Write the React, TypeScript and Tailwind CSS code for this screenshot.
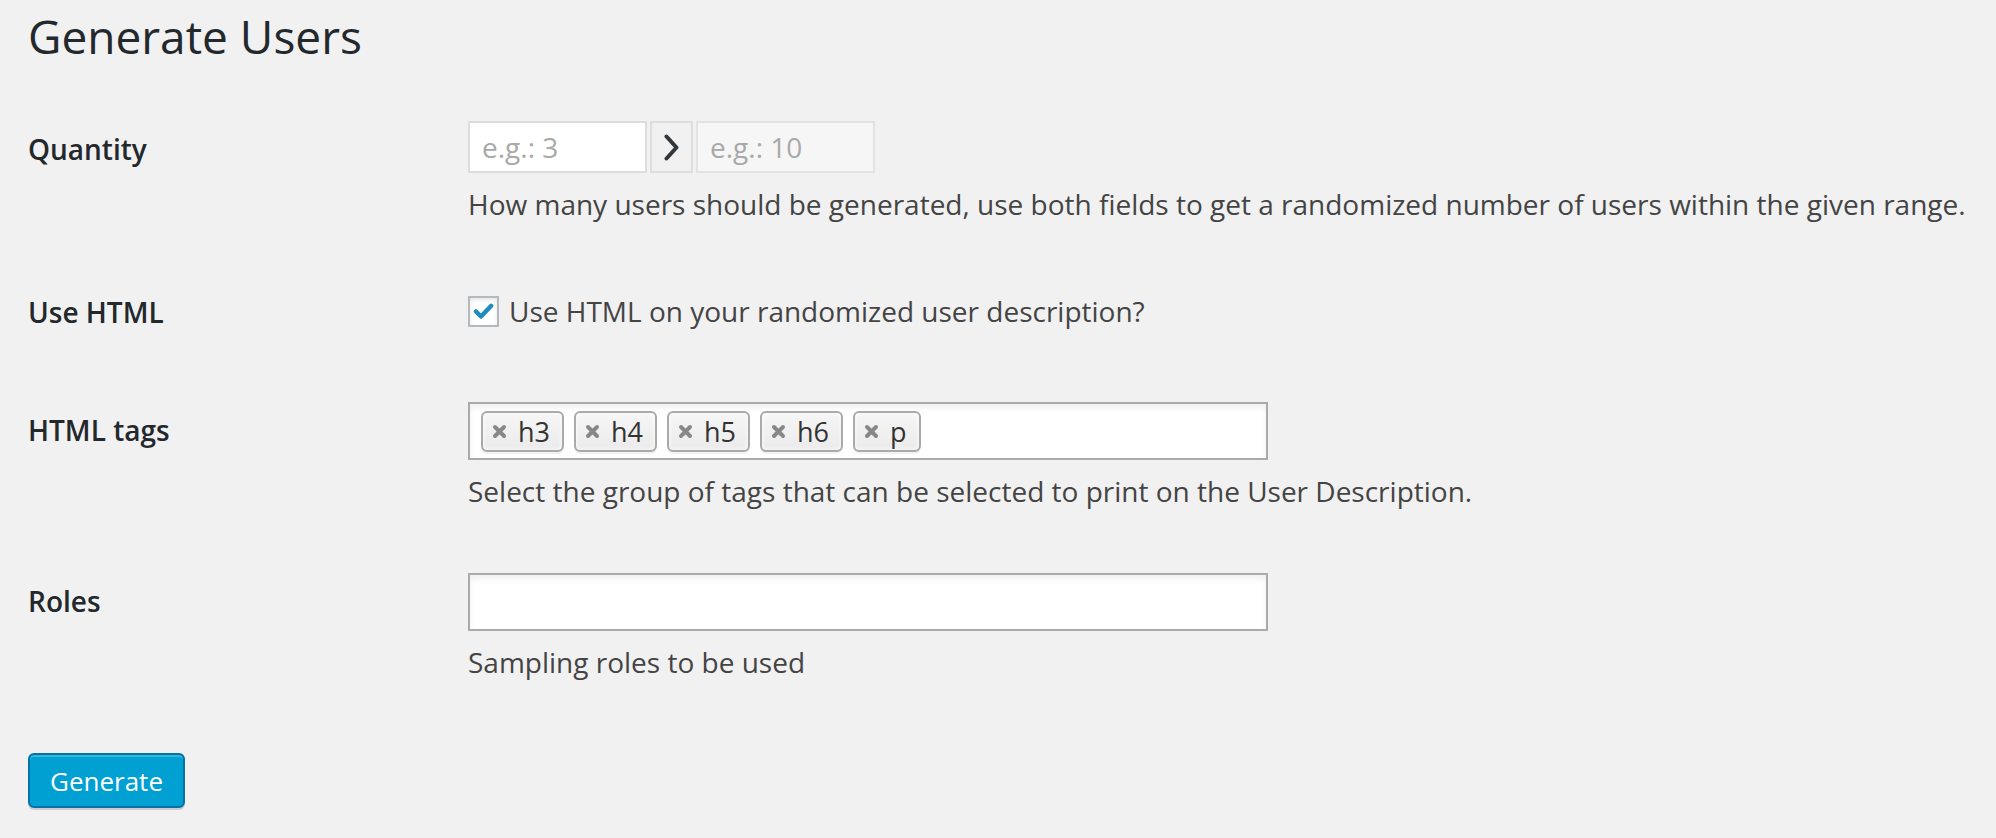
import type { ReactNode } from "react";

const tags = ["h3", "h4", "h5", "h6", "p"];

export default function App() {
  return (
    <div className="min-h-screen bg-[#f1f1f1] px-[28px] font-['Open_Sans',sans-serif] text-[#444]">
      <h1 className="pt-[6px] text-[46px] leading-[60px] font-normal text-[#23282d]">Generate Users</h1>

      <div className="mt-[25px]">
        <Row label="Quantity">
          <div className="flex items-stretch gap-[3px]">
            <input
              className="h-[52px] w-[179px] border-2 border-[#ddd] bg-white px-[12px] text-[28px] text-[#32373c] outline-none placeholder:text-[#a9a9a9]"
              placeholder="e.g.: 3"
            />
            <div className="flex h-[52px] w-[43px] items-center justify-center border-2 border-[#ddd] bg-[#f1f1f1]">
              <svg width="15" height="27" viewBox="0 0 15 27" fill="none">
                <path d="M2.5 2.5 L12.5 13.5 L2.5 24.5" stroke="#32373c" strokeWidth="4" strokeLinecap="round" strokeLinejoin="round" />
              </svg>
            </div>
            <input
              className="h-[52px] w-[179px] border-2 border-[#e2e2e2] bg-[#f6f6f6] px-[12px] text-[28px] text-[#32373c] outline-none placeholder:text-[#a9a9a9]"
              placeholder="e.g.: 10"
            />
          </div>
          <Description>
            How many users should be generated, use both fields to get a randomized number of users within the given range.
          </Description>
        </Row>

        <Row label="Use HTML">
          <label className="flex items-center gap-[10px] pt-[12px] text-[28px] leading-[31px] text-[#444]">
            <span className="flex h-[31px] w-[31px] items-center justify-center border-2 border-[#b4b9be] bg-white shadow-[inset_0_2px_4px_rgba(0,0,0,0.1)]">
              <svg width="21" height="17" viewBox="0 0 21 17" fill="none">
                <path d="M3 8.5 L8 13.5 L18 3" stroke="#1e8cbe" strokeWidth="4.5" strokeLinecap="round" strokeLinejoin="round" />
              </svg>
            </span>
            Use HTML on your randomized user description?
          </label>
        </Row>

        <Row label="HTML tags" bottom="pb-[32px]">
          <div className="flex h-[58px] w-[800px] items-center gap-[10px] border-2 border-[#aaa] bg-white px-[11px] shadow-[inset_0_4px_6px_rgba(0,0,0,0.06)]">
            {tags.map((tag) => (
              <span
                key={tag}
                className="flex h-[41px] items-center gap-[11px] rounded-[6px] border-2 border-[#aaa] bg-gradient-to-b from-[#f6f6f6] to-[#ebebeb] pr-[12px] pl-[9px] text-[27px] leading-none text-[#333] shadow-[inset_0_0_4px_#fff,0_2px_0_rgba(0,0,0,0.05)]"
              >
                <svg width="15" height="15" viewBox="0 0 15 15" fill="none">
                  <path d="M3 3 L12 12 M12 3 L3 12" stroke="#888" strokeWidth="4" strokeLinecap="round" />
                </svg>
                {tag}
              </span>
            ))}
          </div>
          <Description>Select the group of tags that can be selected to print on the User Description.</Description>
        </Row>

        <Row label="Roles">
          <div className="h-[58px] w-[800px] border-2 border-[#aaa] bg-white shadow-[inset_0_4px_6px_rgba(0,0,0,0.06)]" />
          <Description>Sampling roles to be used</Description>
        </Row>
      </div>

      <button className="mt-[41px] h-[55px] rounded-[6px] border-2 border-[#0073aa] bg-[#00a0d2] px-[20px] text-[26px] leading-none text-white shadow-[inset_0_2px_0_rgba(120,200,230,0.5),0_2px_0_rgba(0,0,0,0.15)]">
        Generate
      </button>
    </div>
  );
}

function Row({ label, children, bottom = "pb-[30px]" }: { label: string; children: ReactNode; bottom?: string }) {
  return (
    <div className="flex">
      <div className="w-[440px] shrink-0 pt-[40px] pb-[42px] text-[28px] leading-[36px] font-semibold text-[#23282d]">{label}</div>
      <div className={`min-w-0 flex-1 pt-[30px] ${bottom}`}>{children}</div>
    </div>
  );
}

function Description({ children }: { children: ReactNode }) {
  return <p className="mt-[12px] text-[28px] leading-[39px] text-[#444]">{children}</p>;
}
